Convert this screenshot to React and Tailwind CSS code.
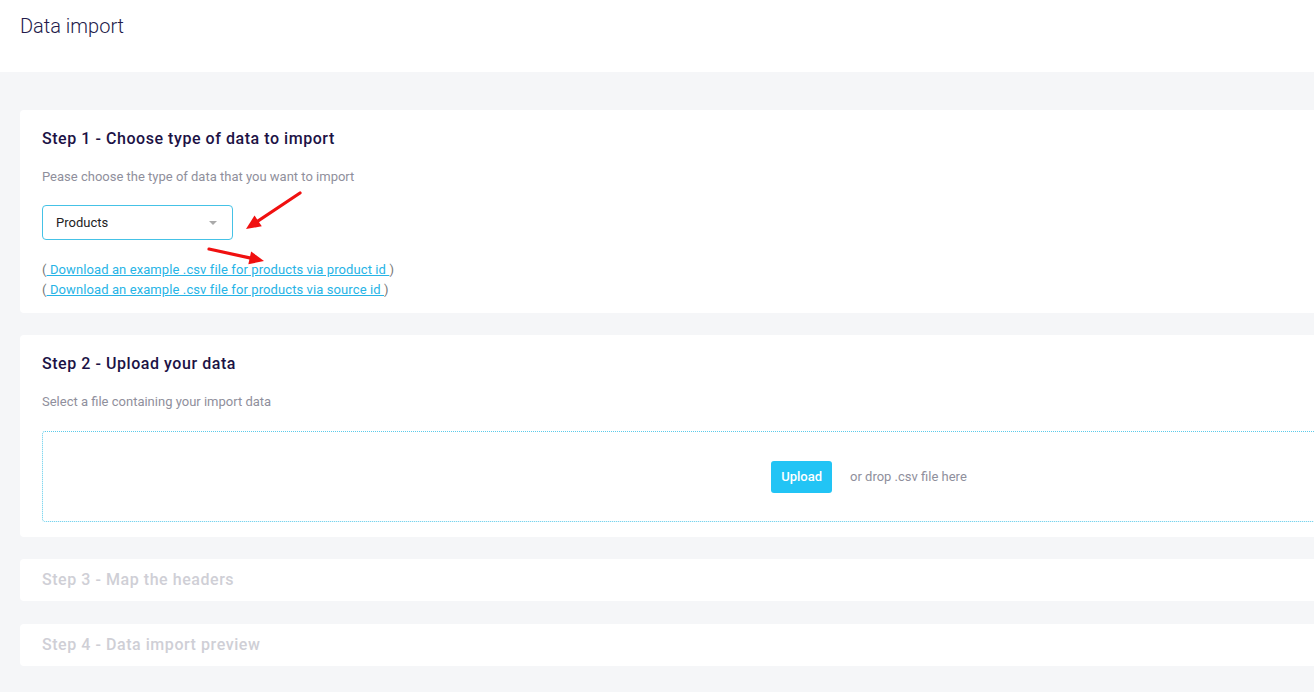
import React from 'react';

const Arrow = ({ className, x1, y1, x2, y2 }) => {
    // red annotation arrow, head at (x2,y2)
    const ang = Math.atan2(y2 - y1, x2 - x1);
    const len = 16;
    const spread = 0.42;
    const p1 = [x2 - len * Math.cos(ang - spread), y2 - len * Math.sin(ang - spread)];
    const p2 = [x2 - len * Math.cos(ang + spread), y2 - len * Math.sin(ang + spread)];
    const bx = x2 - 10 * Math.cos(ang);
    const by = y2 - 10 * Math.sin(ang);
    return (
        <svg className={className} width="1314" height="692" viewBox="0 0 1314 692">
            <line x1={x1} y1={y1} x2={bx} y2={by} stroke="#f01010" strokeWidth="3.2" strokeLinecap="round" />
            <polygon points={`${x2},${y2} ${p1[0]},${p1[1]} ${p2[0]},${p2[1]}`} fill="#f01010" />
        </svg>
    );
};

const Card = ({ children, className = '' }) => (
    <div className={`bg-white rounded-[4px] px-[22px] ${className}`}>{children}</div>
);

const App = () => {
    return (
        <div className="relative w-full h-[692px] overflow-hidden bg-[#f5f6f8] font-['Roboto',sans-serif]">
            <div className="h-[72px] bg-white px-5 pt-[13px]">
                <h1 className="text-[20px] leading-[26px] font-light text-[#231a4a]">Data import</h1>
            </div>

            <div className="w-[1738px] px-5 pt-[38px] flex flex-col">
                <Card className="pt-[19px] pb-[13px]">
                    <h2 className="text-[16px] leading-[20px] font-medium text-[#1c1245] tracking-[0.55px]">Step 1 - Choose type of data to import</h2>
                    <p className="mt-[18px] text-[13px] leading-[20px] text-[#8f8f9c]">Pease choose the type of data that you want to import</p>
                    <div className="mt-[18px] w-[191px] h-[35px] border border-[#45c2e6] rounded-[4px] flex items-center justify-between pl-[13px] pr-[15px]">
                        <span className="text-[13px] text-[#222]">Products</span>
                        <span className="w-0 h-0 border-l-[4px] border-r-[4px] border-t-[4px] border-l-transparent border-r-transparent border-t-[#aaa]"></span>
                    </div>
                    <div className="mt-[20px] text-[13px] leading-[20px] tracking-[0.1px]">
                        <p><span className="text-[#777]">(</span><a className="text-[#27b4e6] underline"> Download an example .csv file for products via product id </a><span className="text-[#777]">)</span></p>
                        <p><span className="text-[#777]">(</span><a className="text-[#27b4e6] underline"> Download an example .csv file for products via source id </a><span className="text-[#777]">)</span></p>
                    </div>
                </Card>

                <Card className="mt-[22px] pt-[19px] pb-[15px]">
                    <h2 className="text-[16px] leading-[20px] font-medium text-[#1c1245] tracking-[0.55px]">Step 2 - Upload your data</h2>
                    <p className="mt-[18px] text-[13px] leading-[20px] text-[#8f8f9c]">Select a file containing your import data</p>
                    <div className="mt-[19px] h-[91px] border border-dotted border-[#5ccbea] rounded-[3px] flex items-center justify-center gap-[18px]">
                        <button className="h-[32px] px-[10px] rounded-[3px] bg-[#22c4f5] text-white text-[13px] font-medium">Upload</button>
                        <span className="text-[13px] text-[#8f8f9c]">or drop .csv file here</span>
                    </div>
                </Card>

                <Card className="mt-[22px] h-[42px] flex items-center">
                    <h2 className="text-[16px] leading-[20px] font-medium text-[#cfcfd6] tracking-[0.55px]">Step 3 - Map the headers</h2>
                </Card>

                <Card className="mt-[23px] h-[42px] flex items-center">
                    <h2 className="text-[16px] leading-[20px] font-medium text-[#cfcfd6] tracking-[0.55px]">Step 4 - Data import preview</h2>
                </Card>
            </div>

            <Arrow className="absolute top-0 left-0 pointer-events-none" x1={300} y1={193} x2={246} y2={229} />
            <Arrow className="absolute top-0 left-0 pointer-events-none" x1={209} y1={249} x2={264} y2={261} />
        </div>
    );
};

export default App;
